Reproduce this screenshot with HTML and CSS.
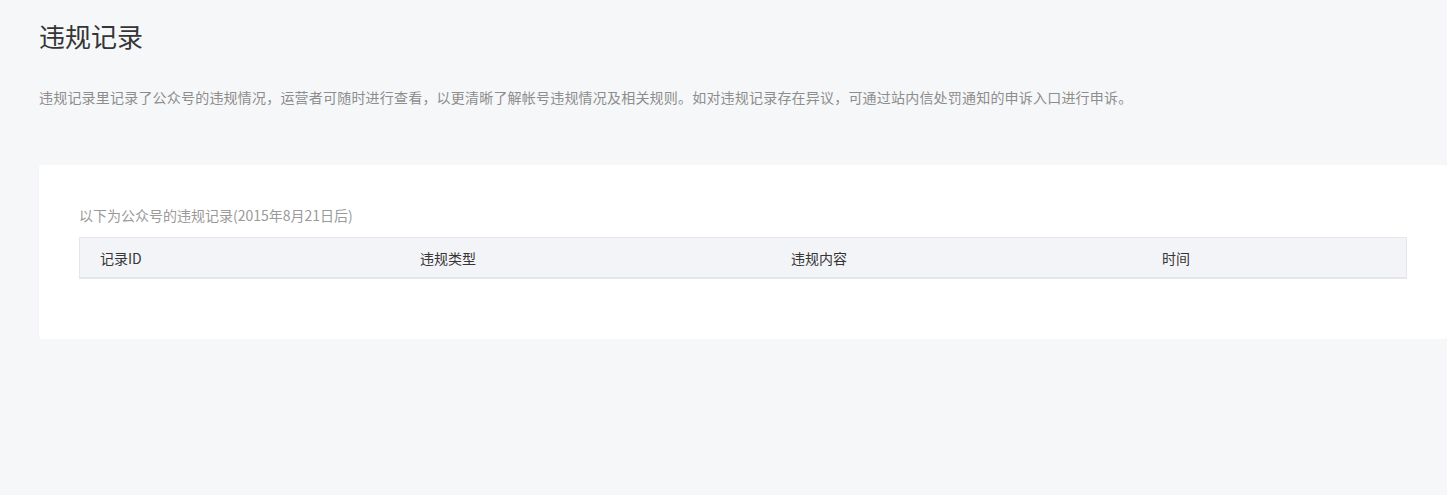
FILE: index.html
```html
<!DOCTYPE html>
<html lang="zh-CN">
<head>
    <meta charset="UTF-8">
    <title>违规记录</title>
    <link rel="stylesheet" href="styles.css">
</head>
<body>
    <div class="page">
        <h2 class="page-title">违规记录</h2>
        <p class="page-desc">违规记录里记录了公众号的违规情况，运营者可随时进行查看，以更清晰了解帐号违规情况及相关规则。如对违规记录存在异议，可通过站内信处罚通知的申诉入口进行申诉。</p>
        <div class="card">
            <div class="card-tip">以下为公众号的违规记录(2015年8月21日后)</div>
            <table class="record-table">
                <thead>
                    <tr>
                        <th class="col-id">记录ID</th>
                        <th class="col-type">违规类型</th>
                        <th class="col-content">违规内容</th>
                        <th class="col-time">时间</th>
                    </tr>
                </thead>
                <tbody></tbody>
            </table>
        </div>
    </div>
</body>
</html>
```

FILE: styles.css
```css
body {
    margin: 0;
    background-color: #f6f7f9;
    font-family: "Noto Sans CJK SC", "Liberation Sans", sans-serif;
    color: #353535;
}
.page {
    padding: 0 0 0 39px;
}
.page-title {
    margin: 0;
    padding-top: 17px;
    font-size: 26px;
    font-weight: normal;
    line-height: 38px;
    color: #353535;
}
.page-desc {
    margin: 31px 0 0;
    font-size: 14px;
    line-height: 22px;
    letter-spacing: 0.2px;
    color: #8d8d8d;
}
.card {
    margin-top: 57px;
    background-color: #fff;
    border-radius: 2px;
    box-shadow: 0 1px 2px rgba(0,0,0,0.04);
    padding: 40px 40px 60px;
}
.card-tip {
    font-size: 14px;
    line-height: 20px;
    color: #9a9a9a;
    margin-bottom: 12px;
}
.record-table {
    width: 100%;
    border-collapse: collapse;
    border: 1px solid #e4e6eb;
}
.record-table th {
    background-color: #f3f4f7;
    border-bottom: 2px solid #e4e6eb;
    font-size: 14px;
    font-weight: normal;
    text-align: left;
    height: 39px;
    padding: 0 20px;
    color: #353535;
}
.col-id { width: 280px; }
.col-type { width: 331px; }
.col-content { width: 331px; }
```
